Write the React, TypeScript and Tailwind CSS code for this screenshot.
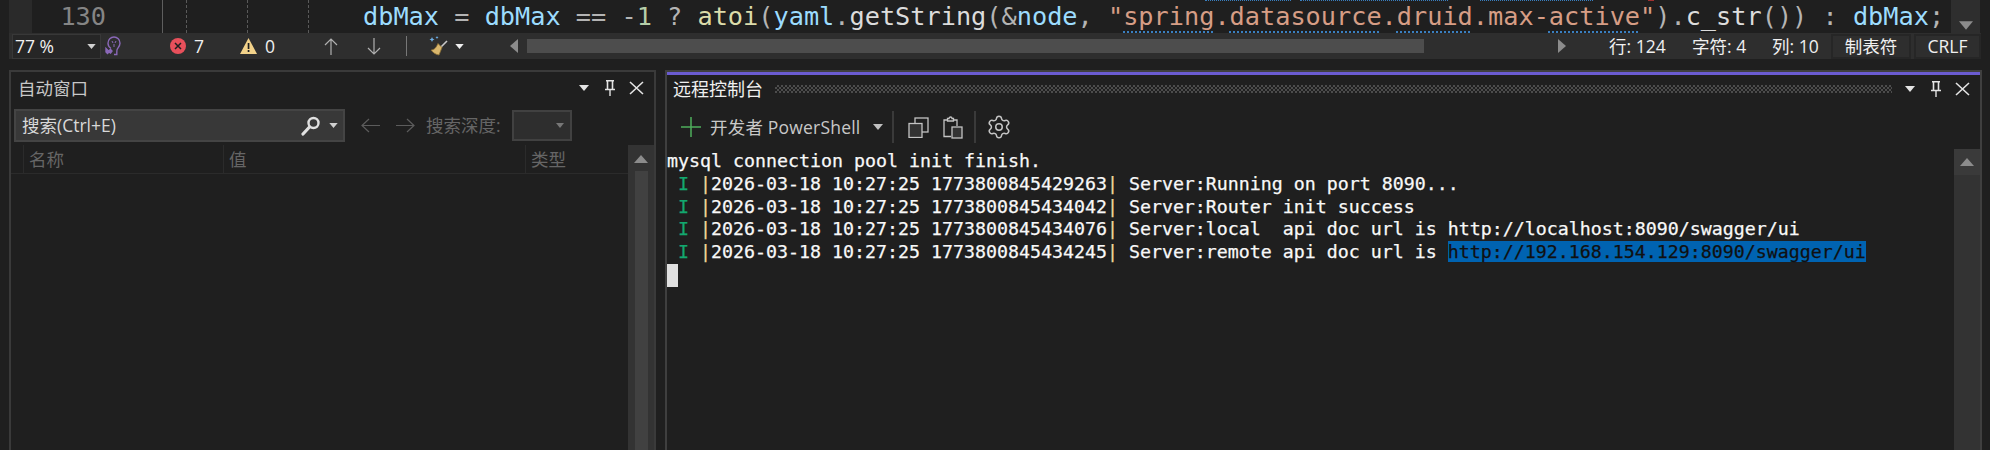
/**
 * Visual Studio lower dock - editor status strip, Autos window and remote console
 */

import { Settings } from 'lucide-react';

const UI_FONT = "font-['Open_Sans','Noto_Sans_CJK_SC',sans-serif]";
const MONO = "font-['DejaVu_Sans_Mono','Liberation_Mono',monospace]";

function Caret({ className = '', color = '#d0d0d0' }: { className?: string; color?: string }) {
  return (
    <svg width="10" height="6" viewBox="0 0 10 6" className={`shrink-0 ${className}`}>
      <polygon points="0,0 10,0 5,6" fill={color} />
    </svg>
  );
}

function Pin({ className = '' }: { className?: string }) {
  return (
    <svg width="10" height="16" viewBox="0 0 10 16" className={`shrink-0 ${className}`} fill="none" stroke="#e4e4e4">
      <path d="M2.500 1v8M7.500 1v8" strokeWidth="1.600" />
      <path d="M1 .8h8M0 9.500h10" strokeWidth="1.500" />
      <path d="M5 10v6" strokeWidth="1.400" />
    </svg>
  );
}

function CloseX({ className = '' }: { className?: string }) {
  return (
    <svg width="15" height="14" viewBox="0 0 15 14" className={`shrink-0 ${className}`} stroke="#e4e4e4" strokeWidth="1.600">
      <path d="M1 1l13 12M14 1L1 13" />
    </svg>
  );
}

function ArrowV({ up, className = '' }: { up: boolean; className?: string }) {
  return (
    <svg width="14" height="17" viewBox="0 0 14 17" className={`shrink-0 ${className}`} fill="none" stroke="#b0b0b0" strokeWidth="1.200">
      {up ? <path d="M7 17V1M1 7l6-6 6 6" /> : <path d="M7 0v16M1 10l6 6 6-6" />}
    </svg>
  );
}

function ArrowH({ left, className = '' }: { left: boolean; className?: string }) {
  return (
    <svg width="19" height="15" viewBox="0 0 19 15" className={`shrink-0 ${className}`} fill="none" stroke="#5c5c5c" strokeWidth="1.200">
      {left ? <path d="M19 7.500H1M8 1L1 7.500 8 14" /> : <path d="M0 7.500h18M11 1l7 6.500L11 14" />}
    </svg>
  );
}

function BulbWrench({ className = '' }: { className?: string }) {
  return (
    <svg width="18" height="20" viewBox="0 0 18 20" className={`shrink-0 ${className}`} fill="none" stroke="#8a68b8" strokeWidth="1.400">
      <path d="M6 12.500C4 11 3 9.300 3 7.200 3 3.800 5.700 1 9 1s6 2.800 6 6.200c0 2.600-1.600 4.200-2.600 5.600-.6.9-.6 2-.6 3.200v2.500H9" />
      <path d="M7 5l1 2M11 5l-1 2M9 8v3" strokeWidth="1" />
      <path d="M1 12.500l2.500 2.500 2-1.500 1.500 1.500-1.500 2-1.500-1-1.500 1.500L1 16z" fill="#8a68b8" />
    </svg>
  );
}

function ErrorIcon() {
  return (
    <svg width="16" height="16" viewBox="0 0 16 16" className="shrink-0">
      <circle cx="8" cy="8" r="8" fill="#e8505b" />
      <path d="M5 5l6 6M11 5l-6 6" stroke="#1f1f1f" strokeWidth="1.500" />
    </svg>
  );
}

function WarningIcon() {
  return (
    <svg width="17" height="16" viewBox="0 0 17 16" className="shrink-0">
      <polygon points="8.500,0 17,16 0,16" fill="#f2d28a" />
      <rect x="7.700" y="5" width="1.700" height="6" fill="#1f1f1f" />
      <rect x="7.700" y="12" width="1.700" height="2" fill="#1f1f1f" />
    </svg>
  );
}

function BrushIcon({ className = '' }: { className?: string }) {
  return (
    <svg width="20" height="20" viewBox="0 0 20 20" className={`shrink-0 ${className}`}>
      <path d="M19 5L13 11" stroke="#c9c9c9" strokeWidth="1.600" />
      <path d="M10 7.500l4 4-3 7.500c-3-.3-6-2.300-8-5 3 0 5-2 7-6.500z" fill="#d9b66c" stroke="#8a6d34" strokeWidth=".8" />
      <path d="M4 1l.8 1.700L6.500 3.500l-1.700.8L4 6l-.8-1.700L1.500 3.500l1.700-.8zM9 0l.5 1L10.500 1.500l-1 .5L9 3l-.5-1-1-.5 1-.5z" fill="#6fb1e8" />
    </svg>
  );
}

function SearchIcon({ className = '' }: { className?: string }) {
  return (
    <svg width="20" height="20" viewBox="0 0 20 20" className={`shrink-0 ${className}`} fill="none" stroke="#e0e0e0">
      <circle cx="12.500" cy="7" r="5" strokeWidth="2.400" />
      <path d="M8.500 11L2 18" strokeWidth="3.200" strokeLinecap="round" />
    </svg>
  );
}

function CopyIcon({ className = '' }: { className?: string }) {
  return (
    <svg width="21" height="21" viewBox="0 0 21 21" className={`shrink-0 ${className}`} fill="none" stroke="#c4c4c4" strokeWidth="1.300">
      <rect x="7" y="1" width="13" height="14" fill="#1f1f1f" />
      <rect x="1" y="6.500" width="13" height="14" fill="#333333" />
    </svg>
  );
}

function PasteIcon({ className = '' }: { className?: string }) {
  return (
    <svg width="20" height="23" viewBox="0 0 20 23" className={`shrink-0 ${className}`} fill="none" stroke="#c4c4c4" strokeWidth="1.300">
      <path d="M8 20.500H1V4h3M11 4h3v6" />
      <path d="M4.500 5V2.500h1.500a1.500 1.500 0 0 1 3 0h1.500V5z" />
      <rect x="9" y="11" width="10" height="11" fill="#333333" />
    </svg>
  );
}

function UpTriangle({ className = '', color = '#8c8c8c' }: { className?: string; color?: string }) {
  return (
    <svg width="14" height="8" viewBox="0 0 14 8" className={`shrink-0 ${className}`}>
      <polygon points="7,0 14,8 0,8" fill={color} />
    </svg>
  );
}

function Word({ c, children }: { c: string; children: React.ReactNode }) {
  return <span style={{ color: c }}>{children}</span>;
}

function Squiggle({ children }: { children: React.ReactNode }) {
  return <span className="underline decoration-dotted decoration-[#3a7fc0] decoration-[1.500px] underline-offset-[6px]">{children}</span>;
}

function CodeLine() {
  const v = '#9cdcfe';
  const op = '#b4b4b4';
  const fn = '#dcdcaa';
  const id = '#dcdcdc';
  const str = '#d69d85';
  return (
    <div className={`${MONO} relative text-[25.250px] leading-[33px] whitespace-pre w-[1588px]`}>
      {/* Squiggle tails of the line above, cut off by the crop */}
      <div className="absolute top-0 left-[842px] w-[86px] border-t border-dotted border-[#3a7fc0]" />
      <div className="absolute top-0 left-[937px] w-[148px] border-t border-dotted border-[#3a7fc0]" />
      <div className="absolute top-0 left-[1117px] w-[113px] border-t border-dotted border-[#3a7fc0]" />
      <div className="absolute top-0 left-[1285px] w-[6px] border-t border-[#a03030]" />
      <Word c={v}>dbMax</Word><Word c={op}> = </Word><Word c={v}>dbMax</Word><Word c={op}> == -</Word><Word c="#b5cea8">1</Word>
      <Word c={op}> ? </Word><Word c={fn}>atoi</Word><Word c={op}>(</Word><Word c={v}>yaml</Word><Word c={op}>.</Word><Word c={id}>getString</Word>
      <Word c={op}>(&amp;</Word><Word c={v}>node</Word><Word c={op}>, </Word>
      <Word c={str}>"<Squiggle>spring</Squiggle>.<Squiggle>datasource</Squiggle>.<Squiggle>druid</Squiggle>.max-<Squiggle>active</Squiggle>"</Word>
      <Word c={op}>).</Word><Word c={id}>c_str</Word><Word c={op}>()) : </Word><Word c={v}>dbMax</Word><Word c={op}>;</Word>
    </div>
  );
}

function EditorRow() {
  return (
    <div className="flex h-[33px] pl-[9px] bg-[#1f1f1f] overflow-hidden">
      <div className="w-[23px] bg-[#2a2a2a]" />
      <div className={`${MONO} w-[74px] text-right text-[25.250px] leading-[33px] text-[#858585]`}>130</div>
      <div className="w-[56px]" />
      <div className="w-px bg-[#5e5e5e]" />
      <div className="w-[23px]" />
      <div className="w-px border-l border-dashed border-[#5a5a5a]" />
      <div className="w-[60px]" />
      <div className="w-px border-l border-dashed border-[#5a5a5a]" />
      <div className="w-[60px]" />
      <div className="w-px border-l border-dashed border-[#5a5a5a]" />
      <div className="w-[54px]" />
      <CodeLine />
      <div className="w-[29px] flex flex-col items-center justify-end pb-[3px] bg-[#2e2e2e]">
        <Caret className="w-[14px] h-[9px]" color="#8c8c8c" />
      </div>
    </div>
  );
}

function StatusBar() {
  return (
    <div className={`${UI_FONT} flex items-center h-[26px] ml-[9px] w-[1972px] bg-[#2e2e2e] text-[17.500px] text-[#f0f0f0]`}>
      <div className="flex items-center ml-[3px] w-[89px] h-[25px] bg-[#262626] border border-[#383838] pl-[2px] pr-[4px]">
        <span className="flex-1">77 %</span>
        <Caret className="w-[9px] h-[5px]" />
      </div>
      <BulbWrench className="ml-[4px]" />
      <div className="ml-[47px]"><ErrorIcon /></div>
      <span className="ml-[8px] w-[10px]">7</span>
      <div className="ml-[36px]"><WarningIcon /></div>
      <span className="ml-[8px] w-[10px]">0</span>
      <ArrowV up className="ml-[49px]" />
      <ArrowV up={false} className="ml-[29px]" />
      <div className="ml-[25px] w-px h-[20px] bg-[#777777]" />
      <BrushIcon className="ml-[21px]" />
      <Caret className="ml-[7px] w-[9px] h-[5px]" color="#f0f0f0" />
      <svg width="8" height="14" viewBox="0 0 8 14" className="ml-[46px] shrink-0"><polygon points="8,0 8,14 0,7" fill="#8c8c8c" /></svg>
      <div className="ml-[9px] w-[897px] h-[14px] bg-[#4d4d4d]" />
      <svg width="8" height="14" viewBox="0 0 8 14" className="ml-[134px] shrink-0"><polygon points="0,0 0,14 8,7" fill="#8c8c8c" /></svg>
      <span className="ml-[43px] w-[83px] whitespace-nowrap">行: 124</span>
      <span className="w-[80px] whitespace-nowrap">字符: 4</span>
      <span className="w-[59px] whitespace-nowrap">列: 10</span>
      <div className="w-[80px] h-[25px] flex items-center justify-center border-2 border-[#262626]">制表符</div>
      <div className="ml-[3px] w-[67px] h-[25px] flex items-center justify-center border-2 border-[#262626]">CRLF</div>
    </div>
  );
}

function AutosPane() {
  return (
    <div className={`${UI_FONT} flex flex-col w-[647px] h-[380px] border-2 border-b-0 border-[#3a3a3a] text-[17.500px]`}>
      <div className="flex items-center h-[34px] shrink-0 pl-[7px] pb-[2px] text-[#c8c8c8]">
        <span className="w-[70px] whitespace-nowrap">自动窗口</span>
        <Caret className="ml-[491px]" color="#e4e4e4" />
        <Pin className="ml-[16px]" />
        <CloseX className="ml-[14px]" />
      </div>
      <div className="flex items-center h-[33px] mt-[3px] shrink-0 pl-[3px]">
        <div className="flex items-center w-[331px] h-[33px] bg-[#383838] border-2 border-[#444444] pl-[6px] text-[#d8d8d8]">
          <span className="flex-1">搜索(Ctrl+E)</span>
          <SearchIcon />
          <Caret className="ml-[8px] mr-[5px] w-[9px] h-[5px]" />
        </div>
        <ArrowH left className="ml-[16px]" />
        <ArrowH left={false} className="ml-[16px]" />
        <span className="ml-[11px] w-[86px] whitespace-nowrap text-[#666666]">搜索深度:</span>
        <div className="flex items-center justify-end w-[60px] h-[31px] bg-[#2e2e2e] border-2 border-[#414141] pr-[6px]">
          <Caret className="w-[8px] h-[5px]" color="#777777" />
        </div>
      </div>
      <div className="flex flex-1 min-h-0 mt-[3px]">
        <div className="flex-1">
          <div className="flex h-[29px] border-b border-[#2b2b2b] text-[#666666] leading-[28px]">
            <div className="w-[13px] border-r border-[#2b2b2b]" />
            <div className="w-[200px] pl-[5px] border-r border-[#2b2b2b]">名称</div>
            <div className="w-[302px] pl-[5px] border-r border-[#2b2b2b]">值</div>
            <div className="flex-1 pl-[5px]">类型</div>
          </div>
        </div>
        <div className="w-[26px] flex flex-col items-center bg-[#333333]">
          <UpTriangle className="mt-[10px]" />
          <div className="w-[13px] flex-1 mt-[8px] bg-[#414141]" />
        </div>
      </div>
    </div>
  );
}

function LogRow({ ts, children }: { ts: string; children: React.ReactNode }) {
  return (
    <div>
      {' '}<span className="text-[#13a86f]">I</span>{' '}
      <span className="text-[#efd59a]">|</span>2026-03-18 10:27:25 {ts}<span className="text-[#efd59a]">|</span> {children}
    </div>
  );
}

function ConsolePane() {
  return (
    <div className={`${UI_FONT} flex flex-col flex-1 h-[380px] border-2 border-b-0 border-[#3f3f3f] text-[17.500px]`}>
      <div className="h-[3px] shrink-0 bg-[#6a5bd0]" />
      <div className="flex items-center h-[28px] shrink-0 pl-[6px] text-[#f0f0f0]">
        <span className="w-[90px] text-[18px] whitespace-nowrap">远程控制台</span>
        <div className="ml-[12px] w-[117px] flex-1 h-[8px] bg-[repeating-conic-gradient(#4c4c4c_0_25%,#1f1f1f_0_50%)] bg-[length:4px_4px]" />
        <Caret className="ml-[12px] w-[12px] h-[6px]" color="#e4e4e4" />
        <Pin className="ml-[15px]" />
        <CloseX className="ml-[14px] mr-[10px]" />
      </div>
      <div className="flex items-center h-[32px] mt-[8px] shrink-0 pl-[14px] text-[#c8c8c8]">
        <svg width="20" height="20" viewBox="0 0 20 20" className="shrink-0" stroke="#4fae5c" strokeWidth="1.500">
          <path d="M10 0v20M0 10h20" />
        </svg>
        <span className="ml-[9px] w-[152px] whitespace-nowrap tracking-[0.2px]">开发者 PowerShell</span>
        <Caret className="ml-[11px]" color="#c0c0c0" />
        <div className="ml-[9px] w-[2px] h-[32px] bg-[#3a3a3a]" />
        <CopyIcon className="ml-[14px]" />
        <PasteIcon className="ml-[14px]" />
        <div className="ml-[11px] w-[2px] h-[32px] bg-[#3a3a3a]" />
        <Settings size={26} strokeWidth={1.400} color="#c4c4c4" className="ml-[10px] shrink-0" />
      </div>
      <div className="flex flex-1 min-h-0 mt-[6px]">
        <div className={`${MONO} flex-1 pt-[1px] text-[18.270px] leading-[22.800px] text-[#f8f8f8] whitespace-pre [-webkit-text-stroke:0.25px]`}>
          <div>mysql connection pool init finish.</div>
          <LogRow ts="1773800845429263">Server:Running on port 8090...</LogRow>
          <LogRow ts="1773800845434042">Server:Router init success</LogRow>
          <LogRow ts="1773800845434076">Server:local  api doc url is http://localhost:8090/swagger/ui</LogRow>
          <LogRow ts="1773800845434245">
            Server:remote api doc url is <span className="bg-[#0063b1] text-[#101010]">http://192.168.154.129:8090/swagger/ui</span>
          </LogRow>
          <div className="w-[11px] h-[23px] bg-[#e0e0e0]" />
        </div>
        <div className="w-[26px] flex flex-col items-center bg-[#333333]">
          <div className="w-full h-[26px] flex justify-center pt-[9px] bg-[#3a3a3a]">
            <UpTriangle />
          </div>
        </div>
      </div>
    </div>
  );
}

export default function App() {
  return (
    <div className="w-[1990px] h-[450px] bg-[#1f1f1f] overflow-hidden">
      <EditorRow />
      <StatusBar />
      <div className="flex mt-[11px] ml-[9px] w-[1973px]">
        <AutosPane />
        <div className="w-[9px] shrink-0" />
        <ConsolePane />
      </div>
    </div>
  );
}
